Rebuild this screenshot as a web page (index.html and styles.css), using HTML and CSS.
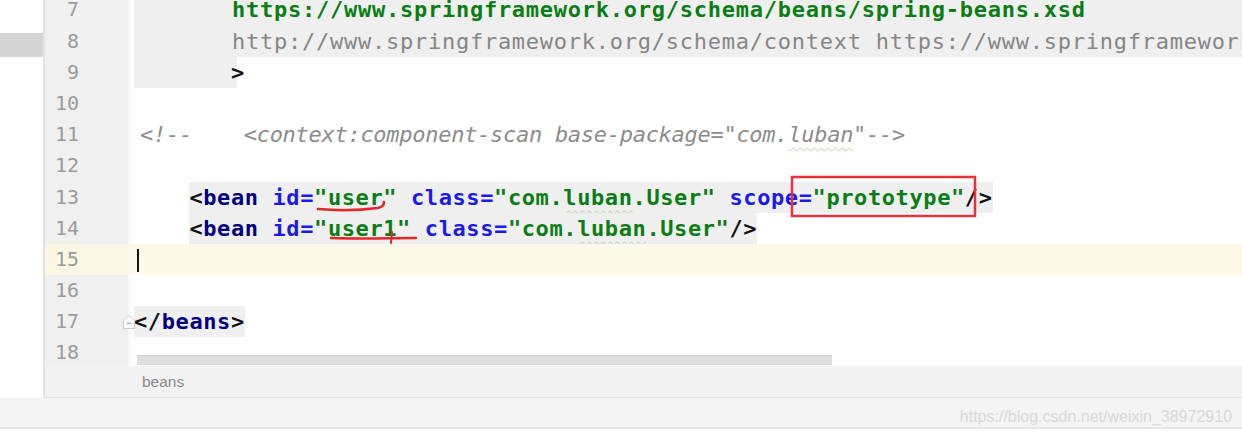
FILE: index.html
```html
<!doctype html>
<html lang="en">
<head>
  <meta charset="utf-8">
  <title>beans.xml</title>
  <link rel="stylesheet" href="styles.css">
</head>
<body>
<div class="top">
  <div class="project">
    <div class="project-sel"></div>
  </div>
  <div class="workspace">
    <div class="editor-area">
      <div class="gutter">
        <div class="ln">7</div>
        <div class="ln">8</div>
        <div class="ln">9</div>
        <div class="ln">10</div>
        <div class="ln">11</div>
        <div class="ln">12</div>
        <div class="ln">13</div>
        <div class="ln">14</div>
        <div class="ln current">15</div>
        <div class="ln">16</div>
        <div class="ln">17</div>
        <div class="ln">18</div>
      </div>
      <div class="editor">
        <div class="lines">
          <div class="line band"><span class="code">       <span class="val">https://www.springframework.org/schema/beans/spring-beans.xsd</span></span></div>
          <div class="line band"><span class="code">       <span class="dim">http://www.springframework.org/schema/context https://www.springframework.org/schema/context/spring-context.xsd</span></span></div>
          <div class="line"><span class="code short">       &gt;</span></div>
          <div class="line"></div>
          <div class="line comment">&lt;!--    &lt;context:component-scan base-package="com.<span class="typo">luban</span>"--&gt;</div>
          <div class="line"></div>
          <div class="line">    <span class="code">&lt;<span class="tag">bean</span> <span class="attr">id=</span><span class="val">"user"</span> <span class="attr">class=</span><span class="val">"com.<span class="typo">luban</span>.User"</span> <span class="attr">scope=</span><span class="val">"prototype"</span>/&gt;</span></div>
          <div class="line">    <span class="code">&lt;<span class="tag">bean</span> <span class="attr">id=</span><span class="val">"user1"</span> <span class="attr">class=</span><span class="val">"com.<span class="typo">luban</span>.User"</span>/&gt;</span></div>
          <div class="line current"><span class="caret"></span></div>
          <div class="line"></div>
          <div class="line fold-end"><svg class="fold" width="14" height="16" viewBox="0 0 14 16"><path d="M1.5 6 L7 1.5 L12.5 6 V14.5 H1.5 Z" fill="#fff" stroke="#c9c9c9"/><path d="M4.5 9.5 H9.5" stroke="#a8a8a8" stroke-width="1.2"/></svg><span class="code">&lt;/<span class="tag">beans</span>&gt;</span></div>
          <div class="line"></div>
        </div>
        <div class="hscroll"></div>
        <svg class="marks" width="1112" height="366" viewBox="0 0 1112 366">
          <rect x="662" y="177" width="183" height="39" fill="none" stroke="#e8323a" stroke-width="2.5"/>
          <path d="M188 209 C210 211 232 210 248 208 C252 207 254 205 254 202" fill="none" stroke="#e3262b" stroke-width="2.5" stroke-linecap="round"/>
          <path d="M201 238 C230 239 260 238 286 238" fill="none" stroke="#e3262b" stroke-width="2.5" stroke-linecap="round"/>
          <path d="M262 232 L261 243" fill="none" stroke="#e3262b" stroke-width="2" stroke-linecap="round"/>
        </svg>
      </div>
    </div>
    <div class="crumbs">beans</div>
  </div>
</div>
<div class="status">
  <span class="watermark">https://blog.csdn.net/weixin_38972910</span>
</div>
<div class="strip">
  <span>  <b>@</b>Service   public   class   UserService   implements   BeanNameAware   {   @Autowired   private   OrderService   orderService</span>
</div>
</body>
</html>
```

FILE: styles.css
```css
body {
  margin: 0;
  width: 1242px;
  height: 438px;
  overflow: hidden;
  background: #fff;
  font-family: "DejaVu Sans Mono", monospace;
}
.top {
  display: flex;
  height: 398px;
}
.project {
  width: 43px;
  flex: none;
  padding-top: 33px;
  border-right: 2px solid #e2e2e2;
  background: #fff;
}
.project-sel {
  height: 24px;
  background: #d5d5d5;
}
.workspace {
  flex: 1;
  min-width: 0;
  display: flex;
  flex-direction: column;
}
.editor-area {
  display: flex;
  height: 366px;
  overflow: hidden;
}
.gutter {
  width: 83px;
  flex: none;
  background: #f0f0f0;
  border-right: 2px solid #f8f8f8;
}
.gutter .ln:first-child,
.lines {
  margin-top: -5.6px;
}
.ln {
  height: 31.2px;
  line-height: 31.2px;
  padding-right: 49px;
  text-align: right;
  font-size: 20px;
  color: #9b9b9b;
}
.ln.current {
  background: #fcf7e4;
}
.editor {
  flex: 1;
  min-width: 0;
  position: relative;
}
.line {
  position: relative;
  height: 31.2px;
  line-height: 31.2px;
  padding-left: 4px;
  white-space: pre;
  font-size: 22px;
  letter-spacing: 0.6px;
  font-weight: bold;
  color: #111;
}
.line.current {
  background: #fdf9e9;
}
.code {
  display: inline-block;
  background: #efefef;
}
.band {
  letter-spacing: 0.75px;
}
.band .code {
  display: block;
}
.code.short {
  width: 103px;
}
.tag {
  color: #000080;
}
.attr {
  color: #1a1aee;
}
.val {
  color: #0a7d14;
}
.dim {
  color: #868686;
  font-weight: normal;
}
.comment {
  padding-left: 10px;
  color: #8c8c8c;
  font-style: italic;
  font-weight: normal;
  letter-spacing: -0.28px;
}
.typo {
  text-decoration: underline wavy #b4d3a4 1px;
  text-underline-offset: 5px;
}
.caret {
  display: inline-block;
  width: 2px;
  height: 23px;
  margin-left: 3px;
  vertical-align: middle;
  background: #111;
}
.fold {
  position: absolute;
  left: -8px;
  top: 8px;
}
.hscroll {
  position: absolute;
  left: 7px;
  top: 355px;
  width: 695px;
  height: 9px;
  background: #dedede;
  border-top: 1px solid #d2d2d2;
}
.marks {
  position: absolute;
  left: 0;
  top: 0;
  pointer-events: none;
}
.crumbs {
  height: 31px;
  line-height: 31px;
  padding-left: 97px;
  background: #f2f2f2;
  border-bottom: 1px solid #e3e3e3;
  font-family: "Liberation Sans", sans-serif;
  font-size: 15.5px;
  color: #8a8a8a;
}
.status {
  height: 31px;
  display: flex;
  justify-content: flex-end;
  align-items: center;
  padding: 9px 10px 0 0;
  box-sizing: border-box;
  background: #f4f4f5;
  border-bottom: 2px solid #e6e6e6;
}
.watermark {
  font-family: "Liberation Sans", sans-serif;
  font-size: 16px;
  color: #d9d9db;
}
.strip {
  height: 7px;
  overflow: hidden;
  background: #fff;
  white-space: pre;
  font-family: "Liberation Sans", sans-serif;
  font-size: 22px;
  line-height: 22px;
  color: #b4b0f2;
}
.strip span {
  display: block;
  margin-top: 2px;
}
```
